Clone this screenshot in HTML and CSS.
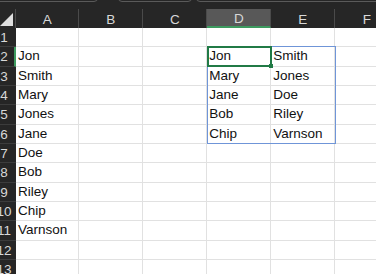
FILE: index.html
```html
<!DOCTYPE html>
<html lang="en">
<head>
  <meta charset="UTF-8">
  <meta name="viewport" content="width=device-width, initial-scale=1.0">
  <title>Sheet1</title>
  <link rel="stylesheet" href="styles.css">
</head>
<body>
  <div class="topbar">
    <div class="box namebox"></div>
    <div class="box fxbox"></div>
    <div class="box formula"></div>
  </div>
  <div class="sheet">
    <div class="corner"><div class="tri"></div></div>
    <div class="colhead">A</div>
    <div class="colhead">B</div>
    <div class="colhead">C</div>
    <div class="colhead sel">D</div>
    <div class="colhead">E</div>
    <div class="colhead">F</div>

    <div class="rowhead"><span>1</span></div>
    <div class="cell"></div><div class="cell"></div><div class="cell"></div><div class="cell"></div><div class="cell"></div><div class="cell"></div>

    <div class="rowhead sel"><span>2</span></div>
    <div class="cell">Jon</div><div class="cell"></div><div class="cell"></div><div class="cell">Jon</div><div class="cell">Smith</div><div class="cell"></div>

    <div class="rowhead"><span>3</span></div>
    <div class="cell">Smith</div><div class="cell"></div><div class="cell"></div><div class="cell">Mary</div><div class="cell">Jones</div><div class="cell"></div>

    <div class="rowhead"><span>4</span></div>
    <div class="cell">Mary</div><div class="cell"></div><div class="cell"></div><div class="cell">Jane</div><div class="cell">Doe</div><div class="cell"></div>

    <div class="rowhead"><span>5</span></div>
    <div class="cell">Jones</div><div class="cell"></div><div class="cell"></div><div class="cell">Bob</div><div class="cell">Riley</div><div class="cell"></div>

    <div class="rowhead"><span>6</span></div>
    <div class="cell">Jane</div><div class="cell"></div><div class="cell"></div><div class="cell">Chip</div><div class="cell">Varnson</div><div class="cell"></div>

    <div class="rowhead"><span>7</span></div>
    <div class="cell">Doe</div><div class="cell"></div><div class="cell"></div><div class="cell"></div><div class="cell"></div><div class="cell"></div>

    <div class="rowhead"><span>8</span></div>
    <div class="cell">Bob</div><div class="cell"></div><div class="cell"></div><div class="cell"></div><div class="cell"></div><div class="cell"></div>

    <div class="rowhead"><span>9</span></div>
    <div class="cell">Riley</div><div class="cell"></div><div class="cell"></div><div class="cell"></div><div class="cell"></div><div class="cell"></div>

    <div class="rowhead"><span>10</span></div>
    <div class="cell">Chip</div><div class="cell"></div><div class="cell"></div><div class="cell"></div><div class="cell"></div><div class="cell"></div>

    <div class="rowhead"><span>11</span></div>
    <div class="cell">Varnson</div><div class="cell"></div><div class="cell"></div><div class="cell"></div><div class="cell"></div><div class="cell"></div>

    <div class="rowhead"><span>12</span></div>
    <div class="cell"></div><div class="cell"></div><div class="cell"></div><div class="cell"></div><div class="cell"></div><div class="cell"></div>

    <div class="rowhead"><span>13</span></div>
    <div class="cell"></div><div class="cell"></div><div class="cell"></div><div class="cell"></div><div class="cell"></div><div class="cell"></div>

    <!-- selection overlays -->
    <div class="range"></div>
    <div class="active"><div class="handle"></div></div>
  </div>
</body>
</html>
```

FILE: styles.css
```css
* {
  box-sizing: border-box;
}
body {
  margin: 0;
  background: #fff;
  font-family: 'Liberation Sans', Arial, sans-serif;
  overflow: hidden;
}
.topbar {
  height: 9px;
  background: #262626;
  display: flex;
  align-items: flex-end;
  overflow: hidden;
}
.box {
  height: 20px;
  margin-bottom: 7px;
  border: 1px solid #5a5a5a;
  border-radius: 4px;
  flex-shrink: 0;
}
.namebox {
  width: 102px;
  margin-left: -4px;
}
.fxbox {
  width: 74px;
  margin-left: 20px;
}
.formula {
  width: 190px;
  margin-left: 4px;
}
.sheet {
  display: grid;
  grid-template-columns: 16px 63.33px repeat(5, 64px);
  grid-template-rows: 19px repeat(13, 19.333px);
  width: max-content;
  position: relative;
}
.corner {
  background: #262626;
  border-right: 1px solid #4a4a4a;
  position: relative;
}
.tri {
  position: absolute;
  right: 2px;
  bottom: 2px;
  width: 0;
  height: 0;
  border-left: 13px solid transparent;
  border-bottom: 13px solid #dedede;
}
.colhead {
  background: #262626;
  color: #d8d8d8;
  font-size: 13.5px;
  line-height: 21px;
  text-align: center;
  border-right: 1px solid #4a4a4a;
}
.colhead.sel {
  background: #585858;
  border-bottom: 2px solid #3d9a5f;
  line-height: 19px;
}
.rowhead {
  background: #262626;
  color: #d8d8d8;
  font-size: 13.5px;
  overflow: hidden;
  border-bottom: 1px solid #3c3c3c;
}
.rowhead span {
  display: block;
  width: 24px;
  margin-left: -8px;
  text-align: center;
  line-height: 19px;
}
.rowhead.sel {
  border-right: 2px solid #3d9a5f;
}
.cell {
  border-right: 1px solid #e1e1e1;
  border-bottom: 1px solid #e1e1e1;
  font-size: 13.5px;
  line-height: 18.33px;
  padding-left: 2px;
  color: #111;
  white-space: nowrap;
}
.range {
  position: absolute;
  left: 206.7px;
  top: 37.3px;
  width: 129.3px;
  height: 98px;
  border: 1px solid #6f95d8;
}
.active {
  position: absolute;
  left: 206.7px;
  top: 37.3px;
  width: 65.6px;
  height: 21px;
  border: 2px solid #217a46;
}
.handle {
  position: absolute;
  right: -3px;
  bottom: -3px;
  width: 4px;
  height: 4px;
  background: #217a46;
}
```
